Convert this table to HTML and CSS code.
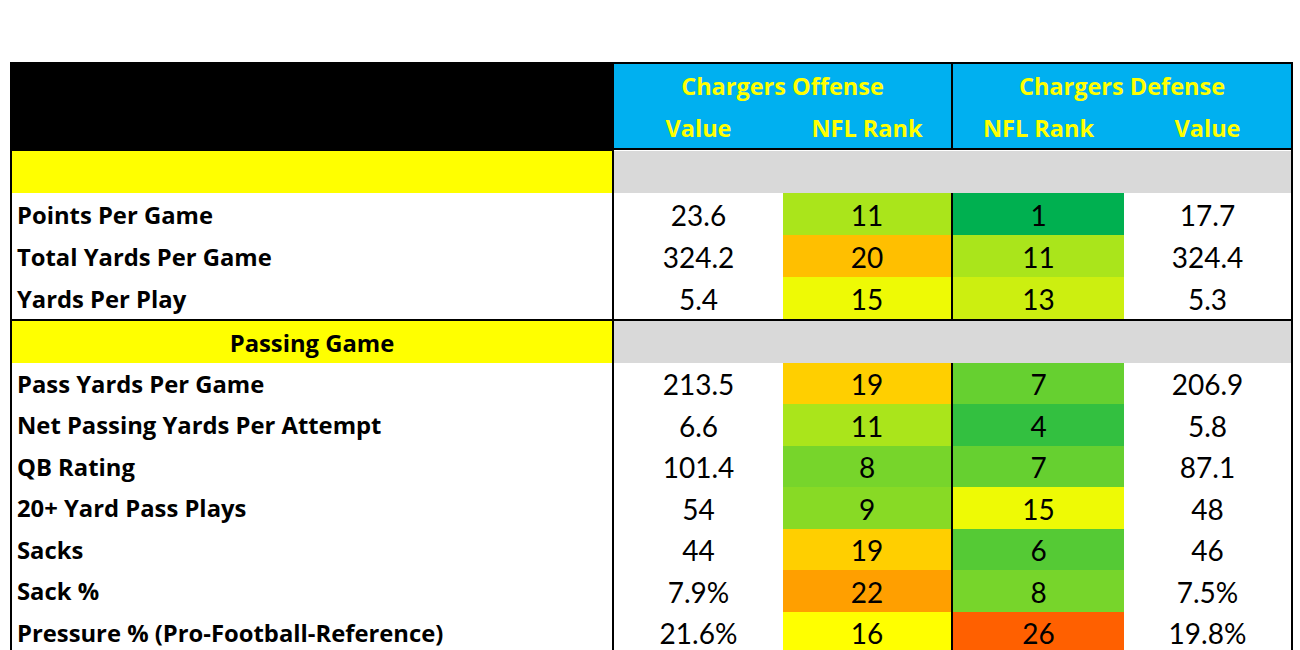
FILE: index.html
```html
<!DOCTYPE html>
<html lang="en">
<head>
<meta charset="utf-8">
<title>Chargers Offense vs Defense</title>
<link rel="stylesheet" href="styles.css">
</head>
<body>
<div class="sheet">
  <div class="hrow">
    <div class="corner"></div>
    <div class="blue span2 title">Chargers Offense</div>
    <div class="blue span2 title def">Chargers Defense</div>
  </div>
  <div class="hrow">
    <div class="corner"></div>
    <div class="blue sub c3">Value</div>
    <div class="blue sub c4">NFL Rank</div>
    <div class="blue sub c6">NFL Rank</div>
    <div class="blue sub c7">Value</div>
  </div>
  <div class="hline"></div>

  <div class="sec first">
    <div class="seclabel"></div>
    <div class="secgray"></div>
  </div>
  <div class="row big">
    <div class="label">Points Per Game</div>
    <div class="num c3">23.6</div>
    <div class="num c4" style="background:#aae51b">11</div>
    <div class="num c6" style="background:#00b050">1</div>
    <div class="num c7">17.7</div>
  </div>
  <div class="row big">
    <div class="label">Total Yards Per Game</div>
    <div class="num c3">324.2</div>
    <div class="num c4" style="background:#ffbf00">20</div>
    <div class="num c6" style="background:#aae51b">11</div>
    <div class="num c7">324.4</div>
  </div>
  <div class="row big">
    <div class="label">Yards Per Play</div>
    <div class="num c3">5.4</div>
    <div class="num c4" style="background:#eefa05">15</div>
    <div class="num c6" style="background:#ccef10">13</div>
    <div class="num c7">5.3</div>
  </div>
  <div class="fline"></div>

  <div class="sec">
    <div class="seclabel">Passing Game</div>
    <div class="secgray"></div>
  </div>
  <div class="row">
    <div class="label">Pass Yards Per Game</div>
    <div class="num c3">213.5</div>
    <div class="num c4" style="background:#ffcf00">19</div>
    <div class="num c6" style="background:#66d030">7</div>
    <div class="num c7">206.9</div>
  </div>
  <div class="row">
    <div class="label">Net Passing Yards Per Attempt</div>
    <div class="num c3">6.6</div>
    <div class="num c4" style="background:#aae51b">11</div>
    <div class="num c6" style="background:#33c040">4</div>
    <div class="num c7">5.8</div>
  </div>
  <div class="row">
    <div class="label">QB Rating</div>
    <div class="num c3">101.4</div>
    <div class="num c4" style="background:#77d52b">8</div>
    <div class="num c6" style="background:#66d030">7</div>
    <div class="num c7">87.1</div>
  </div>
  <div class="row">
    <div class="label">20+ Yard Pass Plays</div>
    <div class="num c3">54</div>
    <div class="num c4" style="background:#88da25">9</div>
    <div class="num c6" style="background:#eefa05">15</div>
    <div class="num c7">48</div>
  </div>
  <div class="row">
    <div class="label">Sacks</div>
    <div class="num c3">44</div>
    <div class="num c4" style="background:#ffcf00">19</div>
    <div class="num c6" style="background:#55ca35">6</div>
    <div class="num c7">46</div>
  </div>
  <div class="row">
    <div class="label">Sack %</div>
    <div class="num c3">7.9%</div>
    <div class="num c4" style="background:#ff9f00">22</div>
    <div class="num c6" style="background:#77d52b">8</div>
    <div class="num c7">7.5%</div>
  </div>
  <div class="row">
    <div class="label">Pressure % (Pro-Football-Reference)</div>
    <div class="num c3">21.6%</div>
    <div class="num c4" style="background:#ffff00">16</div>
    <div class="num c6" style="background:#ff6000">26</div>
    <div class="num c7">19.8%</div>
  </div>
</div>
</body>
</html>
```
FILE: styles.css
```css
html, body {
  margin: 0;
  padding: 0;
  background: #ffffff;
  overflow: hidden;
}

body {
  font-family: Lato, "Open Sans", sans-serif;
  color: #000;
}

.sheet {
  margin: 62px 0 0 10px;
  width: 1283px;
  box-sizing: border-box;
  border-top: 2px solid #000;
  border-left: 2px solid #000;
  border-right: 2px solid #000;
}

.hrow, .row, .sec {
  display: grid;
  grid-template-columns: 600px 2px 169px 168px 2px 171px 167px;
}

.hrow {
  height: 42px;
  background: #000;
}

.corner {
  grid-column: 1 / 3;
}

.blue {
  background: #00b0f0;
  color: #ffff00;
  font-family: "Open Sans", Lato, sans-serif;
  font-weight: 700;
  font-size: 23.5px;
  display: flex;
  align-items: center;
  justify-content: center;
}

.title {
  padding-top: 2px;
}

.span2 {
  grid-column: 3 / 5;
}

.span2.def {
  grid-column: 6 / 8;
}

.sub {
  padding-top: 2px;
}

.c3 { grid-column: 3; }
.c4 { grid-column: 4; }
.c6 { grid-column: 6; }
.c7 { grid-column: 7; }

.hline, .fline {
  height: 2px;
  background: #000;
}

.sec {
  height: 41.5px;
  background: #000;
}

.sec.first {
  height: 43px;
}

.seclabel {
  grid-column: 1;
  background: #ffff00;
  font-family: "Open Sans", Lato, sans-serif;
  font-weight: 700;
  font-size: 23.8px;
  display: flex;
  align-items: center;
  justify-content: center;
  padding-top: 2px;
}

.sec.first .seclabel {
  border-top: 1px solid #000;
}

.secgray {
  grid-column: 3 / 8;
  background: #d9d9d9;
}

.sec.first .secgray {
  border-top: 1px solid #fff;
}

.row {
  height: 41.5px;
  background: #000;
}

.row.big {
  height: 42px;
}

.label {
  grid-column: 1;
  background: #fff;
  font-family: "Open Sans", Lato, sans-serif;
  font-weight: 700;
  font-size: 23.8px;
  display: flex;
  align-items: center;
  padding: 1px 0 0 5px;
  white-space: nowrap;
}

.num {
  background: #fff;
  font-size: 28px;
  display: flex;
  align-items: center;
  justify-content: center;
  padding-top: 2px;
}
```
